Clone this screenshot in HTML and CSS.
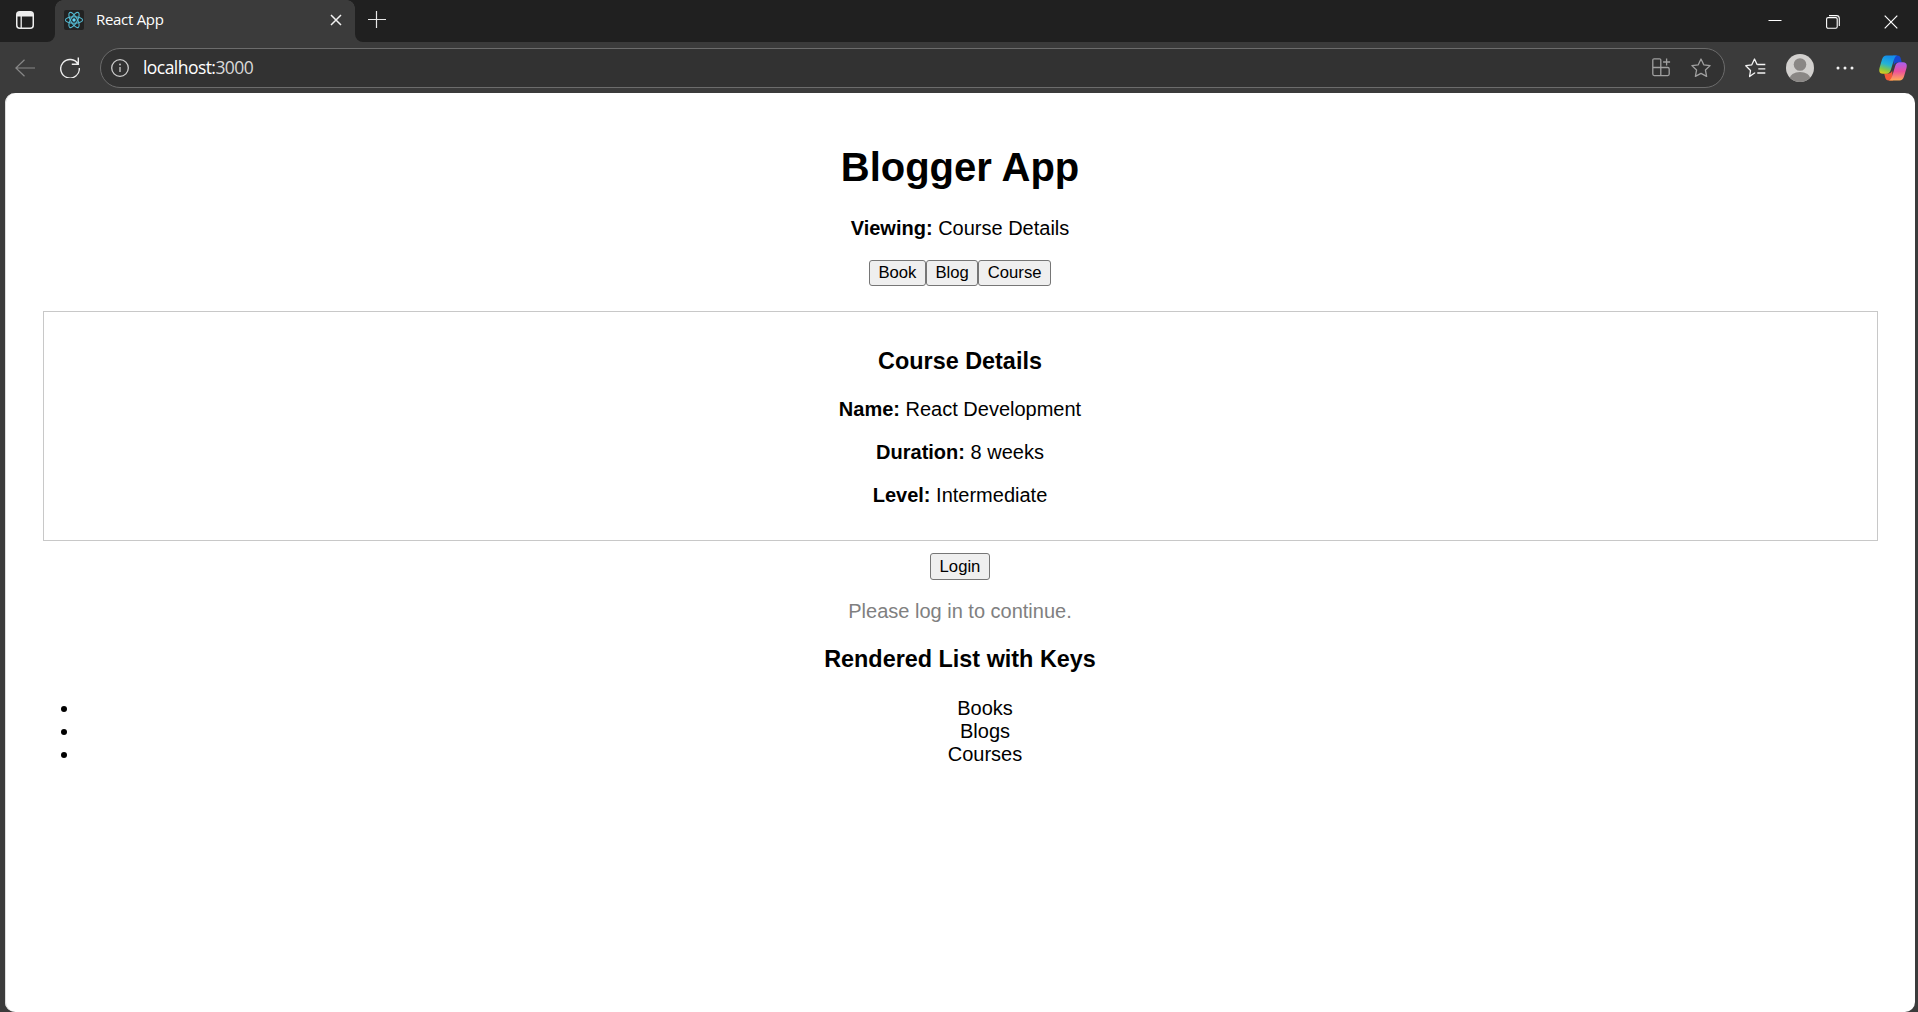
FILE: index.html
```html
<!DOCTYPE html>
<html lang="en">
<head>
<meta charset="utf-8">
<title>React App</title>
<link rel="stylesheet" href="styles.css">
</head>
<body>
<div class="window">
  <header class="tabstrip">
    <div class="workspace">
      <svg width="18" height="18" viewBox="0 0 18 18"><rect x=".75" y=".75" width="16.5" height="16.5" rx="3" fill="none" stroke="#eee" stroke-width="1.5"/><path d="M1 3.5Q1 1 3.5 1h11Q17 1 17 3.500V5.500H1z" fill="#eee"/><path d="M5.200 5v12" stroke="#eee" stroke-width="1.300"/></svg>
    </div>
    <div class="tab">
      <svg class="favicon" width="20" height="20" viewBox="0 0 20 20"><rect width="20" height="20" rx="2" fill="#222"/><g fill="none" stroke="#53b9d1" stroke-width="1.100"><ellipse cx="10" cy="10" rx="8.600" ry="3.300"/><ellipse cx="10" cy="10" rx="8.600" ry="3.300" transform="rotate(60 10 10)"/><ellipse cx="10" cy="10" rx="8.600" ry="3.300" transform="rotate(120 10 10)"/></g><circle cx="10" cy="10" r="1.700" fill="#61dafb"/></svg>
      <span class="tab-title">React App</span>
      <svg class="tab-close" width="12" height="12" viewBox="0 0 12 12"><path d="M1 1l10 10M11 1L1 11" stroke="#f2f2f2" stroke-width="1.500"/></svg>
    </div>
    <svg class="new-tab" width="18" height="18" viewBox="0 0 18 18"><path d="M0 8.500h18M8.500 0v17" stroke="#e8e8e8" stroke-width="1.200"/></svg>
    <div class="window-controls">
      <svg width="14" height="14" viewBox="0 0 14 14"><path d="M.5 5.500h13" stroke="#fff"/></svg>
      <svg width="14" height="14" viewBox="0 0 14 14"><g fill="none" stroke="#fff" stroke-width="1.100"><rect x=".6" y="2.600" width="10.600" height="10.600" rx="1.500"/><path d="M3 .6h7.500q2.800 0 2.800 2.800v7.600"/></g></svg>
      <svg width="14" height="14" viewBox="0 0 14 14"><path d="M.7.7l12.600 12.600M13.300.7L.7 13.300" stroke="#fff" stroke-width="1.200"/></svg>
    </div>
  </header>
  <nav class="toolbar">
    <svg class="back" width="20" height="18" viewBox="0 0 20 18"><path d="M9.500.8L.9 9l8.600 8.200M1 9h19" fill="none" stroke="#888" stroke-width="1.200"/></svg>
    <svg class="reload" width="20" height="21" viewBox="0 0 20 21"><path d="M18.200 7.300A9.300 9.300 0 1 0 19.300 11M18.300.5v6.800h-6.500" fill="none" stroke="#eee" stroke-width="1.400"/></svg>
    <div class="address">
      <svg width="18" height="18" viewBox="0 0 18 18"><circle cx="9" cy="9" r="8.300" fill="none" stroke="#ccc" stroke-width="1.300"/><path d="M9 8v5" stroke="#ccc" stroke-width="1.300"/><circle cx="9" cy="5.500" r=".9" fill="#ccc"/></svg>
      <span class="url">localhost:<span class="port">3000</span></span>
      <svg class="apps" width="19" height="19" viewBox="0 0 19 19"><path d="M8.800 9.500V2.200Q8.800.8 7.400.8H2.200Q.8.8.8 2.200v13.900Q.8 17.600 2.300 17.600h13.400q1.500 0 1.500-1.500V11q0-1.500-1.500-1.500H.8M8.800 9.500v8M14.600.5v7M11.100 4h7" fill="none" stroke="#a0a0a0" stroke-width="1.300"/></svg>
      <svg width="20" height="20" viewBox="0 0 20 20"><path d="M10 1l2.750 5.800 6.350.85-4.650 4.400 1.150 6.350L10 15.350 4.400 18.400l1.150-6.350L.9 7.650l6.350-.85z" fill="none" stroke="#a0a0a0" stroke-width="1.300" stroke-linejoin="round"/></svg>
    </div>
    <svg class="favorites" width="21" height="20" viewBox="0 0 21 20"><path d="M10.200 15.200L9.500 15 4.600 18.600l.9-6.100L.8 7.700l6-.9L9.500 1l2.700 5.800M12.300 6.500h8M13.300 10.800h7M12.300 15h8" fill="none" stroke="#f4f4f4" stroke-width="1.300" stroke-linejoin="round"/></svg>
    <svg class="avatar" width="28" height="28" viewBox="0 0 28 28"><defs><clipPath id="avatar-circle"><circle cx="14" cy="14" r="14"/></clipPath></defs><circle cx="14" cy="14" r="14" fill="#d2d0ce"/><g clip-path="url(#avatar-circle)" fill="#8a8785"><circle cx="14" cy="10.500" r="6.300"/><ellipse cx="14" cy="25" rx="10.500" ry="7"/></g></svg>
    <svg class="more" width="18" height="4" viewBox="0 0 18 4"><g fill="#f2f2f2"><circle cx="2" cy="2" r="1.500"/><circle cx="9" cy="2" r="1.500"/><circle cx="16" cy="2" r="1.500"/></g></svg>
    <svg class="copilot" width="28" height="26" viewBox="0 0 28 26">
      <defs>
        <linearGradient id="cp-left" x1=".3" y1="0" x2="0" y2="1"><stop offset="0" stop-color="#148fea"/><stop offset=".4" stop-color="#24b3d6"/><stop offset=".7" stop-color="#83c847"/><stop offset="1" stop-color="#f5ca13"/></linearGradient>
        <linearGradient id="cp-right" x1="0" y1="0" x2="0" y2="1"><stop offset="0" stop-color="#a65ff0"/><stop offset=".5" stop-color="#ec4f9c"/><stop offset="1" stop-color="#ffac55"/></linearGradient>
      </defs>
      <path d="M14 .5h4.500q2.500 0 3.300 3l1 4h-4q-3 0-4 3z" fill="#1648cf"/>
      <path d="M14 25.500H9.500q-2.500 0-3.300-3l-1-4h4q3 0 4-3z" fill="#f35a38"/>
      <path d="M7.500.5H18q-2 .5-3 4l-3.200 10.500q-1.100 3.700-4.500 3.700H4Q-.8 18.700.5 13L3 4.500Q4.200.5 7.500.5z" fill="url(#cp-left)"/>
      <path d="M20.500 25.500H10q2-.5 3-4L16.200 11q1.100-3.700 4.500-3.700H24q4.800 0 3.500 5.700L25 21.500q-1.200 4-4.500 4z" fill="url(#cp-right)"/>
    </svg>
  </nav>
  <main class="page">
    <h1>Blogger App</h1>
    <p><strong>Viewing:</strong> Course Details</p>
    <div class="choices"><button>Book</button><button>Blog</button><button>Course</button></div>
    <section class="details">
      <h3>Course Details</h3>
      <p><strong>Name:</strong> React Development</p>
      <p><strong>Duration:</strong> 8 weeks</p>
      <p><strong>Level:</strong> Intermediate</p>
    </section>
    <div class="login"><button>Login</button></div>
    <p class="hint">Please log in to continue.</p>
    <h3>Rendered List with Keys</h3>
    <ul>
      <li>Books</li>
      <li>Blogs</li>
      <li>Courses</li>
    </ul>
  </main>
</div>
</body>
</html>
```
FILE: styles.css
```css
* { box-sizing: border-box; }
body { margin: 0; background: #3b3b3b; overflow: hidden; }
svg { display: block; flex: none; }

.window { display: flex; flex-direction: column; height: 1012px; font-family: "Open Sans", "Noto Sans", sans-serif; }

.tabstrip { display: flex; align-items: flex-start; height: 42px; background: #3b3b3b; }
.workspace { width: 55px; height: 42px; padding: 11px 0 0 16px; background: #202020; border-bottom-right-radius: 8px; }
.tab { display: flex; align-items: center; width: 300px; height: 42px; padding: 0 13px 2px 9px; background: #3b3b3b; position: relative; }
.tab::before, .tab::after { content: ""; position: absolute; top: 0; width: 8px; height: 8px; }
.tab::before { left: 0; background: radial-gradient(circle at 100% 100%, #3b3b3b 7.500px, #202020 8px); }
.tab::after { right: 0; background: radial-gradient(circle at 0 100%, #3b3b3b 7.500px, #202020 8px); }
.tab-title { margin-left: 12px; padding-bottom: 2px; color: #fff; font-size: 15px; line-height: 20px; letter-spacing: -.3px; }
.tab-close { margin-left: auto; }
.new-tab { width: 31px; height: 42px; padding: 11px 0 13px 13px; background: #202020; border-bottom-left-radius: 8px; }
.window-controls { flex: 1; display: flex; justify-content: flex-end; gap: 44px; height: 42px; padding: 15px 20px 0 0; background: #202020; }

.toolbar { display: flex; align-items: center; height: 51px; padding: 0 11px 0 15px; }
.reload { margin-left: 25px; }
.address { flex: none; display: flex; align-items: center; width: 1625px; height: 40px; margin-left: 20px; padding: 0 13px 0 10px; background: #323232; border: 1px solid #6c6c6c; border-radius: 20px; }
.url { margin-left: 14px; padding-bottom: 1px; color: #fff; font-size: 17.500px; line-height: 24px; letter-spacing: -.550px; }
.port { color: #d8d8d8; }
.apps { margin: 0 20px 0 auto; }
.favorites { margin-left: 20px; }
.avatar { margin-left: 20px; }
.more { margin-left: 22px; }
.copilot { margin-left: auto; }

.page { flex: 1; margin: 0 3px 0 5px; padding: 24.400px 25px 25px; background: #fff; box-shadow: inset 1px 0 #ddd; border-radius: 10px; color: #000; font: 20px/23px "Liberation Sans", Arial, sans-serif; text-align: center; }
h1 { margin: 26.800px 0; font-size: 40px; line-height: 46px; }
h3 { margin: 23.400px 0; font-size: 23.400px; line-height: 27px; }
p { margin: 20px 0; }
.choices, .login { display: flex; justify-content: center; }
button { height: 26px; margin: 0; padding: 0 8.500px; background: #efefef; border: 1px solid #767676; border-radius: 3px; color: #000; font: 16.667px/19px "Liberation Sans", Arial, sans-serif; }
.login button { height: 26.600px; }
.details { margin: 25px 12.500px 12.500px; padding: 12.500px; border: 1px solid #c8c8c8; display: flow-root; }
.details p:last-child { margin-bottom: 20px; }
.hint { color: gray; }
ul { margin: 0; padding-left: 50px; }
```
